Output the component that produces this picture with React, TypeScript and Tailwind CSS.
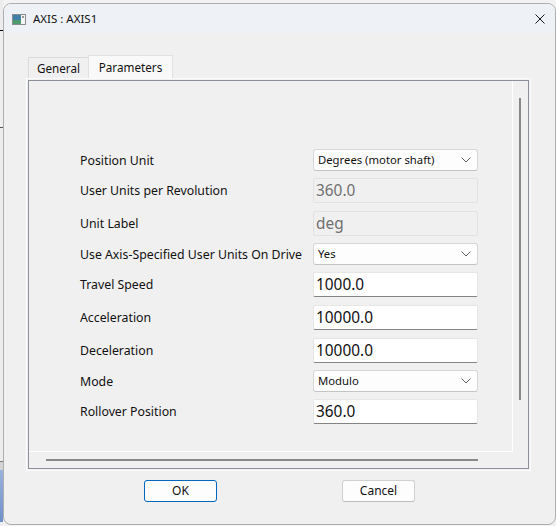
import React from 'react';

type Row = {
  label: string;
  kind: 'select' | 'text' | 'disabled';
  value: string;
  gap: string;
};

const rows: Row[] = [
  { label: 'Position Unit', kind: 'select', value: 'Degrees (motor shaft)', gap: 'mt-0' },
  { label: 'User Units per Revolution', kind: 'disabled', value: '360.0', gap: 'mt-[7px]' },
  { label: 'Unit Label', kind: 'disabled', value: 'deg', gap: 'mt-[8px]' },
  { label: 'Use Axis-Specified User Units On Drive', kind: 'select', value: 'Yes', gap: 'mt-[7px]' },
  { label: 'Travel Speed', kind: 'text', value: '1000.0', gap: 'mt-[7px]' },
  { label: 'Acceleration', kind: 'text', value: '10000.0', gap: 'mt-[8px]' },
  { label: 'Deceleration', kind: 'text', value: '10000.0', gap: 'mt-[8px]' },
  { label: 'Mode', kind: 'select', value: 'Modulo', gap: 'mt-[7px]' },
  { label: 'Rollover Position', kind: 'text', value: '360.0', gap: 'mt-[7px]' },
];

function Chevron() {
  return (
    <svg width="10" height="6" viewBox="0 0 10 6">
      <path d="M0.5 0.5 L5 5 L9.5 0.5" fill="none" stroke="#606060" strokeWidth="1" />
    </svg>
  );
}

function Field({ row }: { row: Row }) {
  if (row.kind === 'select') {
    return (
      <div className="flex h-[22px] w-[165px] items-center justify-between rounded-[3px] border border-[#d6d6d6] border-b-[#c4c4c4] bg-[#fdfdfd] pl-[4px] pr-[6px] text-[11.3px] text-[#111]">
        <span>{row.value}</span>
        <Chevron />
      </div>
    );
  }
  if (row.kind === 'disabled') {
    return (
      <div className="flex h-[25px] w-[165px] items-center rounded-[2px] border border-[#e2e2e2] bg-[#f0f0f0] pl-[2px] text-[15.4px] text-[#707070]">
        {row.value}
      </div>
    );
  }
  return (
    <div className="flex h-[25px] w-[165px] items-center rounded-[2px] border border-[#e6e6e6] border-b-[#848484] bg-white pl-[2px] text-[15.4px] text-[#111]">
      {row.value}
    </div>
  );
}

function TitleIcon() {
  return (
    <svg width="14" height="11" viewBox="0 0 14 11">
      <rect x="0.5" y="0.5" width="13" height="10" fill="#f4f4f4" stroke="#8c8c8c" />
      <rect x="1" y="1" width="8" height="9" fill="#3f7fa8" />
      <rect x="1" y="6" width="8" height="4" fill="#4f9a6e" />
      <rect x="10" y="2" width="2" height="2" fill="#9a9a9a" />
    </svg>
  );
}

export default function App() {
  return (
    <div className="flex h-[526px] w-[556px] bg-[#f2f2f2] font-['Noto_Sans',sans-serif] text-[#111]">
      {/* desktop behind the dialog */}
      <div className="flex h-full w-[3px] flex-col">
        <div className="h-[30px] bg-[#ececec]" />
        <div className="h-[1px] bg-black" />
        <div className="h-[96px] bg-[#eeeeee]" />
        <div className="h-[1px] bg-[#555555]" />
        <div className="h-[333px] bg-[#ececec]" />
        <div className="h-[1px] bg-[#7a7a7a]" />
        <div className="h-[8px] bg-[#d4d4d4]" />
        <div className="h-[52px] bg-gradient-to-b from-[#9bb3dc] to-[#6e8fca]" />
        <div className="flex-1 bg-[#eeeeee]" />
      </div>

      <div className="pt-[3px]">
        <div className="flex h-[522px] w-[553px] flex-col overflow-hidden rounded-[8px] border border-[#aeaeae] bg-[#f0f0f0]">
          {/* title bar */}
          <div className="flex h-[29px] items-center bg-[#eef2f7] pl-[8px] pt-[1px]">
            <TitleIcon />
            <span className="ml-[7px] text-[11.5px]">AXIS : AXIS1</span>
            <svg className="ml-auto mr-[10px]" width="10" height="10" viewBox="0 0 10 10">
              <path d="M0.5 0.5 L9.5 9.5 M9.5 0.5 L0.5 9.5" stroke="#1a1a1a" strokeWidth="1" />
            </svg>
          </div>

          <div className="flex flex-col pl-[22px] pt-[22px]">
            {/* tabs */}
            <div className="ml-[2px] flex h-[23px] items-end">
              <div className="flex h-[21px] w-[60px] items-center justify-center border-l border-t border-[#dadada] pt-[2px] text-[11.7px]">
                General
              </div>
              <div className="flex h-[23px] w-[85px] items-center justify-center border-l border-r border-t border-[#e0e0e0] bg-[#f9f9f9] pt-[1px] text-[11.7px]">
                Parameters
              </div>
            </div>

            {/* tab panel */}
            <div className="h-[393px] w-[505px] border border-[#fbfbfb] p-[1px]">
              <div className="flex h-full flex-col border border-[#8b9099]">
                <div className="flex h-[371px]">
                  <div className="w-[484px] border-b border-r border-white pl-[51px] pt-[68px]">
                    {rows.map((row) => (
                      <div key={row.label} className={`flex items-center ${row.gap}`}>
                        <div className="w-[233px] whitespace-nowrap pt-[2px] text-[12.3px]">{row.label}</div>
                        <Field row={row} />
                      </div>
                    ))}
                  </div>
                  <div className="w-[15px] pl-[6px] pt-[17px]">
                    <div className="h-[302px] w-[2px] bg-[#898989]" />
                  </div>
                </div>
                <div className="h-[16px] pl-[17px] pt-[7px]">
                  <div className="h-[2px] w-[432px] bg-[#898989]" />
                </div>
              </div>
            </div>

            {/* buttons */}
            <div className="mt-[9px] flex pl-[118px]">
              <button className="h-[22px] w-[73px] rounded-[3px] border border-[#0067c0] bg-[#fdfdfd] text-[12px] text-[#111]">
                OK
              </button>
              <button className="ml-[125px] h-[22px] w-[73px] rounded-[3px] border border-[#d0d0d0] border-b-[#bdbdbd] bg-[#fdfdfd] text-[12px] text-[#111]">
                Cancel
              </button>
            </div>
          </div>
        </div>
      </div>
    </div>
  );
}
